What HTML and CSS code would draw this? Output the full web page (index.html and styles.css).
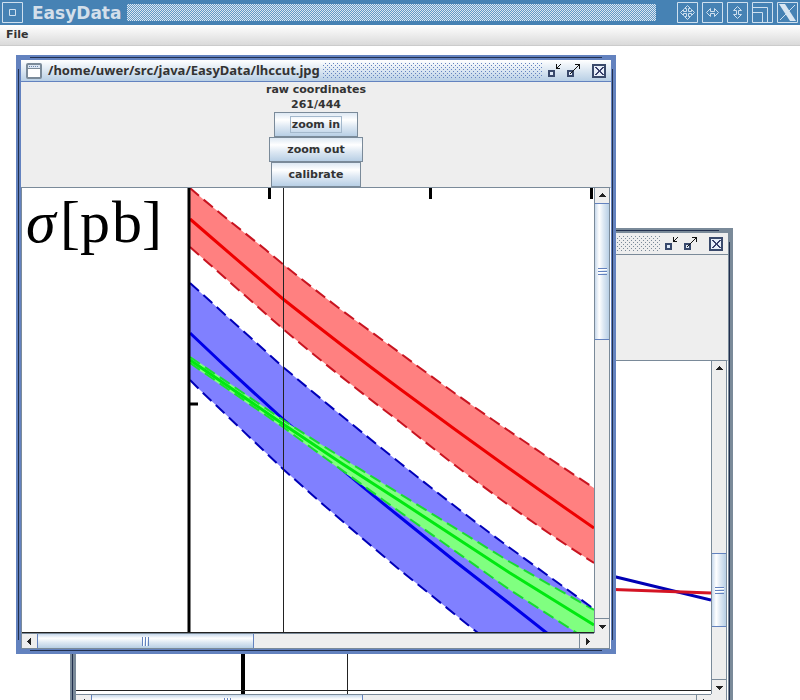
FILE: index.html
```html
<!DOCTYPE html>
<html lang="en">
<head>
<meta charset="utf-8">
<title>EasyData</title>
<link rel="stylesheet" href="styles.css">
</head>
<body>
<svg class="defs" aria-hidden="true">
  <symbol id="arrow" viewBox="0 0 9 5" shape-rendering="crispEdges"><path d="M4 0h1v1h1v1h1v1h1v1H1V3h1V2h1V1h1z" fill="#222"/></symbol>
  <symbol id="win-icon" viewBox="0 0 16 16">
    <rect x="1" y="1" width="14" height="14" rx="1" fill="#fff" stroke="#7a8a99" stroke-width="2"/>
    <path d="M2 2h12v3H2z" fill="#dbe6f3"/>
    <path d="M3 3.500h10" stroke="#6f88ad" stroke-dasharray="1 1"/>
    <path d="M2 5.500h12" stroke="#7a8a99"/>
  </symbol>
  <symbol id="iconify" viewBox="0 0 16 16" shape-rendering="crispEdges">
    <path d="M3 8h5v5H3z" fill="#dfeaf8" stroke="#39496b" stroke-width="2"/>
    <path d="M10 1h1v3h1V3h1V2h1V1h1v1h-1v1h-1v1h-1v1h2v1h-4z" fill="#111"/>
  </symbol>
  <symbol id="maximize" viewBox="0 0 16 16" shape-rendering="crispEdges">
    <path d="M3 8h5v5H3z" fill="#dfeaf8" stroke="#39496b" stroke-width="2"/>
    <path d="M10 1h5v5h-1V3h-1v1h-1v1h-1v1h-1v1H9v1H8v1H7v1H6v1H5v-1h1V9h1V8h1V7h1V6h1V5h1V4h1V3h1V2h-3z" fill="#111"/>
  </symbol>
  <symbol id="close" viewBox="0 0 16 16" shape-rendering="crispEdges">
    <path d="M2 2h12v12H2z" fill="#e8effa" stroke="#39496b" stroke-width="2"/>
    <path d="M4 4h2v1h1v1h1v1h1V6h1V5h1V4h2v1h-1v1h-1v1h-1v2h1v1h1v1h1v1h-2v-1h-1v-1H9V9H8v1H7v1H6v1H4v-1h1v-1h1V9h1V7H6V6H5V5H4z" fill="#39406b"/>
  </symbol>
</svg>

<header class="titlebar">
  <button class="wm" aria-label="Window menu"><svg viewBox="0 0 21 21"><path d="M.5.5h20v20H.5zM7.500 7.500h6v6h-6z"/></svg></button>
  <h1>EasyData</h1>
  <div class="hatch"></div>
  <div class="wm-group">
    <button class="wm" aria-label="Move"><svg viewBox="0 0 21 21"><path d="M.5.5h20v20H.5zM10.500 3.500l3 3h-2v3h3v-2l3 3-3 3v-2h-3v3h2l-3 3-3-3h2v-3h-3v2l-3-3 3-3v2h3v-3h-2z"/></svg></button>
    <button class="wm" aria-label="Widen"><svg viewBox="0 0 21 21"><path d="M.5.5h20v20H.5zM4.500 10.500l4-4v3h4v-3l4 4-4 4v-3h-4v3z"/></svg></button>
    <button class="wm" aria-label="Heighten"><svg viewBox="0 0 21 21"><path d="M.5.5h20v20H.5zM10.500 4.500l4 4h-3v4h3l-4 4-4-4h3v-4h-3z"/></svg></button>
    <button class="wm" aria-label="Maximize"><svg viewBox="0 0 21 21"><path d="M.5.5h20v20H.5zM.5 5.500h15v15M.5 10.500h10v10"/></svg></button>
    <button class="wm" aria-label="Close"><svg viewBox="0 0 21 21"><path d="M.5.5h20v20H.5zM18 3L3 18"/><path class="fill" d="M2 2h6l11 17h-6z"/></svg></button>
  </div>
</header>
<nav class="menubar"><button>File</button></nav>

<main class="desktop">
  <section class="frame back">
    <div class="inner">
      <div class="caption">
        <svg class="i16"><use href="#win-icon"/></svg><h2></h2><div class="dots"></div>
        <button aria-label="Minimize"><svg class="i16"><use href="#iconify"/></svg></button>
        <button aria-label="Maximize"><svg class="i16"><use href="#maximize"/></svg></button>
        <button class="close" aria-label="Close"><svg class="i16"><use href="#close"/></svg></button>
      </div>
      <div class="panel"></div>
      <div class="view">
        <svg class="plot" viewBox="76 361 635 333" preserveAspectRatio="xMinYMin slice">
          <path d="M243 361V694" stroke="#000" stroke-width="4"/>
          <path d="M600 573L616 577Q670 590 711 600" fill="none" stroke="#0000b4" stroke-width="3"/>
          <path d="M600 589L711 593" stroke="#d41424" stroke-width="3"/>
          <path d="M347.500 361V694M76 690.500H711" stroke="#222"/>
        </svg>
        <div class="vbar"><button aria-label="Scroll up"><svg><use href="#arrow"/></svg></button><div class="track"><div class="thumb"></div></div><button class="down" aria-label="Scroll down"><svg><use href="#arrow"/></svg></button></div>
        <div class="hbar"><button class="left" aria-label="Scroll left"><svg><use href="#arrow"/></svg></button><div class="track"><div class="thumb"></div></div><button class="right" aria-label="Scroll right"><svg><use href="#arrow"/></svg></button></div>
        <div class="corner"></div>
      </div>
    </div>
  </section>

  <section class="frame front">
    <div class="inner">
      <div class="caption">
        <svg class="i16"><use href="#win-icon"/></svg><h2>/home/uwer/src/java/EasyData/lhccut.jpg</h2><div class="dots"></div>
        <button aria-label="Minimize"><svg class="i16"><use href="#iconify"/></svg></button>
        <button aria-label="Maximize"><svg class="i16"><use href="#maximize"/></svg></button>
        <button class="close" aria-label="Close"><svg class="i16"><use href="#close"/></svg></button>
      </div>
      <div class="panel">
        <div>raw coordinates</div>
        <div>261/444</div>
        <button class="focused"><span>zoom in</span></button>
        <button><span>zoom out</span></button>
        <button><span>calibrate</span></button>
      </div>
      <div class="view">
        <svg class="plot" viewBox="22 188 572 445" preserveAspectRatio="xMinYMin slice">
          <path fill="#ff8080" d="M190 188C214 209 240 229 266 250Q283 265 340 309L400 353Q445 387 493 420T594 488V563Q555 538 510 506T400 422Q340 377 283 329L190 247z"/>
          <path fill="#8080ff" d="M190 283L200 292 283 367Q340 415 400 463T510 548L594 609V633H478L400 570Q340 520 283 469L200 390 190 380z"/>
          <path class="mid" stroke="#0000e8" d="M190 333Q236 377 283 419 341 470 400 517 455 562 510 604L548 634"/>
          <path fill="#80ff80" d="M190 356L283 420Q340 457 400 494L510 562 594 610V643L577 633 510 590 400 512Q340 470 283 428L190 364z"/>
          <path class="dash" stroke="#18dc30" d="M190 357L283 420Q340 457 400 494L510 562 594 610M190 363L283 427Q340 469 400 512L510 590 577 633"/>
          <path class="mid" stroke="#00e810" d="M190 360L283 424Q340 463 400 501L510 573 594 625"/>
          <path class="mid" stroke="#ee0000" d="M190 219Q236 259 283 299 342 346 400 389 497 461 594 528"/>
          <path class="dash" stroke="#c81420" d="M190 188C214 209 240 229 266 250Q283 265 340 309L400 353Q445 387 493 420T594 488M190 247L283 329Q340 377 400 422 465 474 510 506T594 563"/>
          <path class="dash" stroke="#0000b8" d="M190 283L200 292 283 367Q340 415 400 463T510 548L594 609M190 380L200 390 283 469Q340 520 400 570L478 633"/>
          <path d="M189 188V633" stroke="#000" stroke-width="3"/>
          <path d="M269.500 188V199M430.500 188V199M591.500 188V199M190 404H198" stroke="#000" stroke-width="3"/>
          <path d="M283.500 188V633M22 632.500H594" stroke="#222"/>
          <text class="label" y="242"><tspan class="sigma" x="26">σ</tspan><tspan x="60">[</tspan><tspan x="80">p</tspan><tspan x="112">b</tspan><tspan x="142">]</tspan></text>
        </svg>
        <div class="vbar"><button aria-label="Scroll up"><svg><use href="#arrow"/></svg></button><div class="track"><div class="thumb"></div></div><button class="down" aria-label="Scroll down"><svg><use href="#arrow"/></svg></button></div>
        <div class="hbar"><button class="left" aria-label="Scroll left"><svg><use href="#arrow"/></svg></button><div class="track"><div class="thumb"></div></div><button class="right" aria-label="Scroll right"><svg><use href="#arrow"/></svg></button></div>
        <div class="corner"></div>
      </div>
    </div>
  </section>
</main>
</body>
</html>
```
FILE: styles.css
```css
* { box-sizing: border-box; }
body {
  margin: 0;
  height: 100vh;
  display: flex;
  flex-direction: column;
  overflow: hidden;
  background: #fff;
  color: #333;
  font: bold 11px/15px "DejaVu Sans", sans-serif;
}
button { font: inherit; color: inherit; margin: 0; padding: 0; border: 0; background: none; }
h1, h2 { margin: 0; font-size: inherit; white-space: nowrap; }
svg { display: block; }
.defs { position: absolute; width: 0; height: 0; }

.titlebar { display: flex; align-items: center; height: 25px; padding: 0 2px; background: #4682b4; flex: none; }
.titlebar h1 { margin: 0 6px 0 9px; font-size: 17px; line-height: 24px; color: #d3dfea; }
.hatch { flex: 1; height: 17px; background: repeating-conic-gradient(#dfe8f0 0 25%, #6299c6 0 50%) 0 0 / 2px 2px; }
.wm-group { display: flex; gap: 4px; margin-left: 21px; }
.wm svg { width: 21px; height: 21px; fill: none; stroke: #cfe0ef; }
.wm .fill { fill: #d8e6f2; stroke: none; }

.menubar { height: 21px; padding: 2px 6px; flex: none; border-bottom: 1px solid #ccc; background: linear-gradient(#fff, #dadada); }
.desktop { position: relative; flex: 1; }

.frame {
  position: absolute;
  padding: 5px;
  background:
    linear-gradient(#22304e, #22304e) 14px 2px / calc(100% - 28px) 1px no-repeat,
    linear-gradient(#22304e, #22304e) 14px calc(100% - 3px) / calc(100% - 28px) 1px no-repeat,
    linear-gradient(#22304e, #22304e) 2px 14px / 1px calc(100% - 28px) no-repeat,
    linear-gradient(#22304e, #22304e) calc(100% - 3px) 14px / 1px calc(100% - 28px) no-repeat,
    var(--edge);
}
.front { --edge: #6382bf; left: 16px; top: 9px; width: 600px; height: 599px; }
.back { --edge: #7a8a99; left: 70px; top: 182px; width: 663px; height: 487px; }
.inner { display: flex; flex-direction: column; height: 100%; background: #eee; }
.caption {
  display: flex; align-items: center; flex: none; height: 22px; padding: 0 4px 0 5px;
  border-bottom: 1px solid var(--edge);
  background: linear-gradient(#fff, #b8cfe5);
}
.back .caption { background: #eee; }
.caption h2 { margin: 0 2px 0 6px; font-family: "Noto Sans", sans-serif; font-size: 13px; }
.i16 { width: 16px; height: 16px; }
.caption button { margin-left: 3px; }
.caption .close { margin-left: 10px; }
.dots {
  flex: 1; height: 16px;
  background:
    conic-gradient(at 3px 1px, var(--edge) 25%, transparent 0) 0 0 / 4px 4px,
    conic-gradient(at 3px 1px, var(--edge) 25%, transparent 0) 2px 2px / 4px 4px;
}
.panel { display: flex; flex-direction: column; align-items: center; flex: none; height: 105px; }
.panel button { height: 25px; padding: 3px 15px; border: 1px solid #7a8a99; background: linear-gradient(#dde8f3, #fff 30%, #dde8f3 60%, #b8cfe5); }
.panel button span { display: block; padding: 0 1px; border: 1px solid transparent; }
.panel .focused span { border-color: #a3b8cc; }

.view {
  flex: 1; min-height: 0; display: grid;
  grid-template: minmax(0, 1fr) 16px / minmax(0, 1fr) 16px;
  border: 1px solid #7a8a99; border-right-color: #fff;
  border-bottom: 0;
}
.plot { width: 100%; height: 100%; background: #fff; }
.mid { fill: none; stroke-width: 3; }
.dash { fill: none; stroke-width: 2; stroke-dasharray: 12 6; }
.label { font: normal 60px "Liberation Serif", serif; fill: #000; }
.sigma { font-style: italic; }

.vbar, .hbar { display: flex; background: #eee; }
.vbar { flex-direction: column; border-left: 1px solid #7a8a99; border-right: 1px solid #7a8a99; }
.hbar { border-top: 1px solid #7a8a99; border-bottom: 1px solid #7a8a99; }
.vbar button, .hbar button { display: grid; place-items: center; flex: none; width: 14px; height: 15px; }
.hbar button { width: 15px; height: 14px; }
.vbar button svg, .hbar button svg { width: 9px; height: 5px; }
.down svg { transform: rotate(180deg); }
.left svg { transform: rotate(-90deg); }
.right svg { transform: rotate(90deg); }
.vbar button.down { border-top: 1px solid #7a8a99; }
.hbar button.right { border-left: 1px solid #7a8a99; }
.track { flex: 1; position: relative; min-width: 0; min-height: 0; display: flex; }
.vbar .track { flex-direction: column; }
.thumb { position: relative; flex: none; border: 1px solid #6382bf; }
.vbar .thumb { background: linear-gradient(90deg, #c8d9ec, #fff 30%, #dde8f3 60%, #b8cfe5); }
.hbar .thumb { background: linear-gradient(#c8d9ec, #fff 30%, #dde8f3 60%, #b8cfe5); }
.vbar .thumb { border-width: 1px 0; }
.hbar .thumb { border-width: 0 1px; }
.front .vbar .thumb { height: 33%; }
.front .hbar .thumb { width: 40%; }
.back .vbar .thumb { margin-top: 177px; height: 74px; }
.back .hbar .thumb { width: 45%; }
.thumb::after { content: ""; position: absolute; inset: 0; margin: auto; }
.vbar .thumb::after { width: 9px; height: 7px; background: repeating-linear-gradient(#6382bf 0 1px, #fff 1px 2px, transparent 2px 3px); }
.hbar .thumb::after { width: 7px; height: 9px; background: repeating-linear-gradient(90deg, #6382bf 0 1px, #fff 1px 2px, transparent 2px 3px); }
.corner { border: 1px solid #7a8a99; border-width: 0 1px 1px 0; }
```
